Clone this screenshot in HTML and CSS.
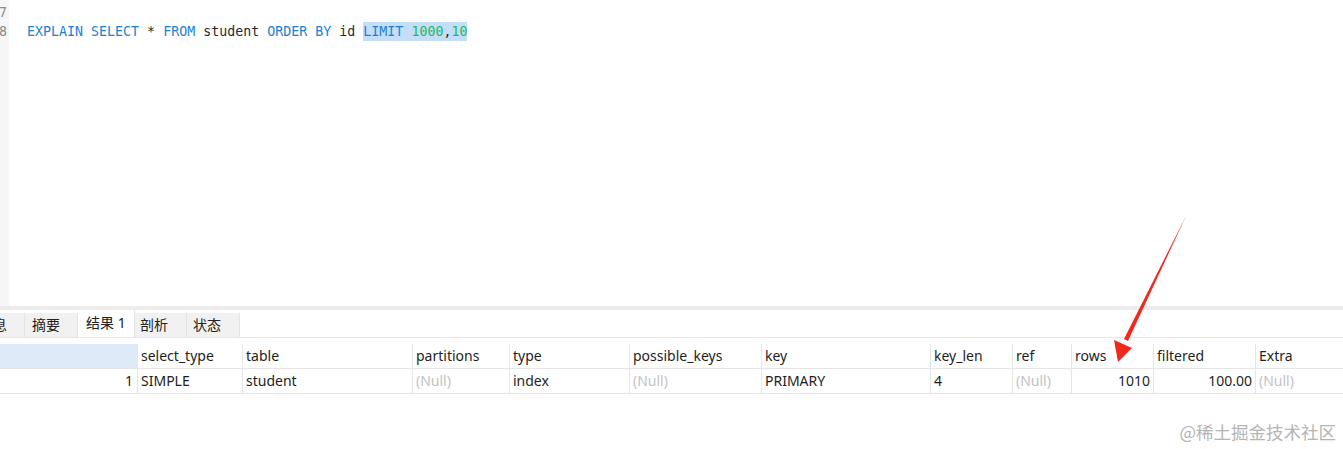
FILE: index.html
```html
<!DOCTYPE html>
<html>
<head>
<meta charset="utf-8">
<link rel="stylesheet" href="styles.css">
</head>
<body>
<div class="page">
  <div class="editor">
    <div class="gutter">
      <div class="ln">7</div>
      <div class="ln">8</div>
    </div>
    <div class="code">
      <div class="line">&nbsp;</div>
      <div class="line"><span class="kw">EXPLAIN</span> <span class="kw">SELECT</span> * <span class="kw">FROM</span> student <span class="kw">ORDER</span> <span class="kw">BY</span> id <span class="sel"><span class="kw">LIMIT</span> <span class="num">1000</span>,<span class="num">10</span></span></div>
    </div>
  </div>
  <div class="sep"></div>
  <div class="tabs">
    <div class="tab first"><span class="clip">息</span></div>
    <div class="tab t2">摘要</div>
    <div class="tab active">结果 1</div>
    <div class="tab t4">剖析</div>
    <div class="tab t5">状态</div>
  </div>
  <div class="grid">
    <div class="row head">
      <div class="c c0 idhead"></div>
      <div class="c c1">select_type</div>
      <div class="c c2">table</div>
      <div class="c c3">partitions</div>
      <div class="c c4">type</div>
      <div class="c c5">possible_keys</div>
      <div class="c c6">key</div>
      <div class="c c7">key_len</div>
      <div class="c c8">ref</div>
      <div class="c c9">rows</div>
      <div class="c c10">filtered</div>
      <div class="c c11">Extra</div>
    </div>
    <div class="row">
      <div class="c c0 r">1</div>
      <div class="c c1">SIMPLE</div>
      <div class="c c2">student</div>
      <div class="c c3 null">(Null)</div>
      <div class="c c4">index</div>
      <div class="c c5 null">(Null)</div>
      <div class="c c6">PRIMARY</div>
      <div class="c c7">4</div>
      <div class="c c8 null">(Null)</div>
      <div class="c c9 r">1010</div>
      <div class="c c10 r">100.00</div>
      <div class="c c11 null">(Null)</div>
    </div>
  </div>
  <div class="watermark">@稀土掘金技术社区</div>
  <svg class="arrow" width="1343" height="449" viewBox="0 0 1343 449">
    <path d="M1186 216 L1128 341 L1124 339 Z" fill="#f0281e"/>
    <path d="M1118 362 L1114 340 L1123 344 L1132 348 Z" fill="#f0281e"/>
  </svg>
</div>
</body>
</html>
```
FILE: styles.css
```css
html, body {
  margin: 0;
  padding: 0;
  background: #fff;
}
.page {
  position: relative;
  width: 1343px;
  height: 449px;
  overflow: hidden;
  font-family: "Noto Sans", "Noto Sans CJK SC", sans-serif;
  font-size: 14px;
  color: #1e1e1e;
}
.editor {
  display: flex;
  height: 306px;
}
.gutter {
  width: 9px;
  background: #f6f6f6;
  padding-top: 3px;
  font-family: "DejaVu Sans Mono", monospace;
  font-size: 13.3px;
  color: #8a8a8a;
  overflow: hidden;
}
.ln {
  height: 19px;
  line-height: 19px;
  margin-left: -1px;
}
.code {
  padding-top: 3px;
  padding-left: 18px;
  font-family: "DejaVu Sans Mono", monospace;
  font-size: 13.3px;
  color: #2a2a2a;
}
.line {
  height: 19px;
  line-height: 19px;
  white-space: pre;
}
.kw { color: #1d7fd8; }
.num { color: #22b864; }
.sel { background: #c3def6; display: inline-block; height: 19px; }
.sep {
  height: 4px;
  background: #ececec;
}
.tabs {
  display: flex;
  align-items: flex-end;
  height: 27px;
  border-bottom: 1px solid #e6e6e6;
}
.tab {
  box-sizing: border-box;
  height: 24px;
  line-height: 24px;
  padding: 0 0 0 7px;
  background: #f1f1f1;
  border-right: 1px solid #e3e3e3;
  font-size: 14px;
  color: #222;
  flex: none;
  overflow: hidden;
}
.tab.first {
  width: 25px;
  padding: 0;
  position: relative;
}
.clip {
  display: block;
  margin-left: -7px;
}
.t2 { width: 53px; }
.tab.active {
  width: 57px;
  background: #fff;
  height: 27px;
  line-height: 25px;
  padding-left: 8px;
}
.t4 { width: 52px; padding-left: 5px; }
.t5 { width: 53px; padding-left: 6px; }
.grid {
  margin-top: 6px;
}
.row {
  display: flex;
  height: 24px;
  border-bottom: 1px solid #e6e6e6;
}
.c {
  box-sizing: border-box;
  height: 24px;
  line-height: 24px;
  padding: 0 3px;
  border-right: 1px solid #e6e6e6;
  white-space: nowrap;
  overflow: hidden;
  flex: none;
}
.idhead { background: #dde9f6; }
.r { text-align: right; }
.null { color: #c3c3c3; }
.c0 { width: 138px; padding-right: 4px; }
.c1 { width: 105px; }
.c2 { width: 170px; }
.c3 { width: 97px; }
.c4 { width: 120px; }
.c5 { width: 132px; }
.c6 { width: 169px; }
.c7 { width: 82px; }
.c8 { width: 59px; }
.c9 { width: 82px; }
.c10 { width: 102px; }
.c11 { width: 88px; border-right: none; }
.watermark {
  position: absolute;
  right: 7px;
  top: 419px;
  font-size: 17.5px;
  color: #b4b4b4;
  font-family: "Noto Sans CJK SC", sans-serif;
}
.arrow {
  position: absolute;
  left: 0;
  top: 0;
}
```
